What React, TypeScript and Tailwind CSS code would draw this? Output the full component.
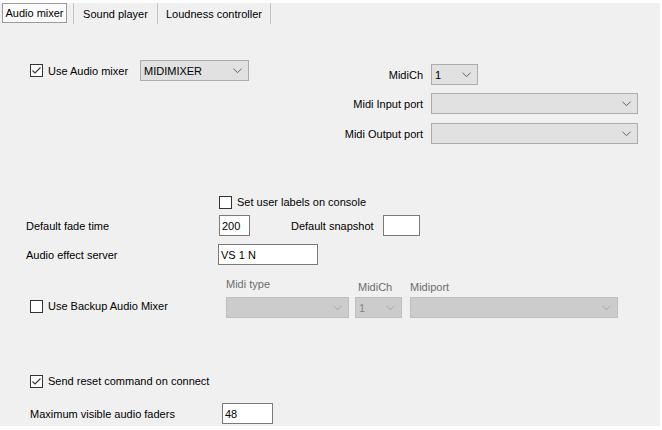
import React from "react";

type ComboProps = {
  className: string;
  value?: string;
  disabled?: boolean;
};

function Chevron({ disabled }: { disabled?: boolean }) {
  return (
    <svg width="9" height="6" viewBox="0 0 9 6" className="shrink-0">
      <path
        d="M0.5 0.8 L4.5 4.6 L8.5 0.8"
        fill="none"
        stroke={disabled ? "#a8a8a8" : "#606060"}
        strokeWidth="1"
      />
    </svg>
  );
}

function Combo({ className, value, disabled }: ComboProps) {
  return (
    <div
      className={
        disabled
          ? `flex h-[21px] items-center justify-between border border-[#bfbfbf] bg-[#cccccc] pl-[3px] pr-[6px] text-[#838383] ${className}`
          : `flex h-[21px] items-center justify-between border border-[#adadad] bg-[#e1e1e1] pl-[3px] pr-[6px] ${className}`
      }
    >
      <span>{value}</span>
      <Chevron disabled={disabled} />
    </div>
  );
}

function TextBox({ className, value }: { className: string; value?: string }) {
  return (
    <div
      className={`flex h-[21px] items-center border border-[#7a7a7a] bg-white pl-[2px] ${className}`}
    >
      {value}
    </div>
  );
}

function CheckBox({ label, checked }: { label: string; checked?: boolean }) {
  return (
    <div className="flex h-[14px] items-center">
      <span className="flex h-[13px] w-[13px] items-center justify-center border border-[#333333] bg-white">
        {checked && (
          <svg width="11" height="11" viewBox="0 0 11 11">
            <path
              d="M1.5 5.5 L4 8 L9.5 2.5"
              fill="none"
              stroke="#333333"
              strokeWidth="1.1"
            />
          </svg>
        )}
      </span>
      <span className="ml-[5px] whitespace-nowrap">{label}</span>
    </div>
  );
}

export default function App() {
  return (
    <div className="h-[430px] w-[662px] bg-white pb-[4px] pr-[2px] pt-[3px] font-['Liberation_Sans',Arial,sans-serif] text-[11px] leading-[14px] text-black">
      <div className="flex h-full flex-col bg-[#f0f0f0]">
        {/* tab strip */}
        <div className="flex h-[21px] items-start">
          <div className="ml-[2px] flex h-[20px] w-[65px] items-center justify-center border border-[#9a9a9a] bg-[#fbfbfb]">
            Audio mixer
          </div>
          <div className="ml-[6px] flex h-[21px] w-[85px] items-center justify-center border-x border-[#c4c4c4]">
            Sound player
          </div>
          <div className="flex h-[21px] w-[113px] items-center justify-center border-r border-[#c4c4c4]">
            Loudness controller
          </div>
        </div>

        {/* mixer + midi ports */}
        <div className="mt-[36px] flex items-start">
          <div className="flex h-[21px] items-center pl-[30px]">
            <div className="w-[110px]">
              <CheckBox label="Use Audio mixer" checked />
            </div>
            <Combo className="w-[109px]" value="MIDIMIXER" />
          </div>
          <div className="ml-auto mr-[22px] mt-[4px] flex flex-col">
            <div className="flex h-[21px] items-center justify-end">
              <span className="mr-[8px]">MidiCh</span>
              <div className="w-[207px]">
                <Combo className="w-[47px]" value="1" />
              </div>
            </div>
            <div className="mt-[8px] flex h-[21px] items-center justify-end">
              <span className="mr-[8px]">Midi Input port</span>
              <Combo className="w-[207px]" />
            </div>
            <div className="mt-[9px] flex h-[21px] items-center justify-end">
              <span className="mr-[8px]">Midi Output port</span>
              <Combo className="w-[207px]" />
            </div>
          </div>
        </div>

        {/* labels, fade, effect server */}
        <div className="mt-[51px] pl-[219px]">
          <CheckBox label="Set user labels on console" />
        </div>
        <div className="mt-[6px] flex h-[21px] items-center pl-[26px]">
          <span className="w-[193px]">Default fade time</span>
          <TextBox className="w-[31px]" value="200" />
          <span className="ml-[41px] w-[92px]">Default snapshot</span>
          <TextBox className="w-[37px]" />
        </div>
        <div className="mt-[8px] flex h-[21px] items-center pl-[26px]">
          <span className="w-[192px]">Audio effect server</span>
          <TextBox className="w-[100px]" value="VS 1 N" />
        </div>

        {/* backup mixer */}
        <div className="mt-[12px] flex items-end">
          <div className="mb-[5px] w-[226px] pl-[30px]">
            <CheckBox label="Use Backup Audio Mixer" />
          </div>
          <div className="flex flex-col text-[#6d6d6d]">
            <span className="mb-[6px]">Midi type</span>
            <Combo className="w-[123px]" disabled />
          </div>
          <div className="ml-[6px] flex flex-col text-[#6d6d6d]">
            <span className="mb-[3px] pl-[3px]">MidiCh</span>
            <Combo className="w-[47px]" value="1" disabled />
          </div>
          <div className="ml-[8px] flex flex-col text-[#6d6d6d]">
            <span className="mb-[3px]">Midiport</span>
            <Combo className="w-[208px]" disabled />
          </div>
        </div>

        {/* reset + faders */}
        <div className="mt-[56px] pl-[30px]">
          <CheckBox label="Send reset command on connect" checked />
        </div>
        <div className="mt-[15px] flex h-[21px] items-center pl-[30px]">
          <span className="w-[192px]">Maximum visible audio faders</span>
          <TextBox className="w-[51px]" value="48" />
        </div>
      </div>
    </div>
  );
}
